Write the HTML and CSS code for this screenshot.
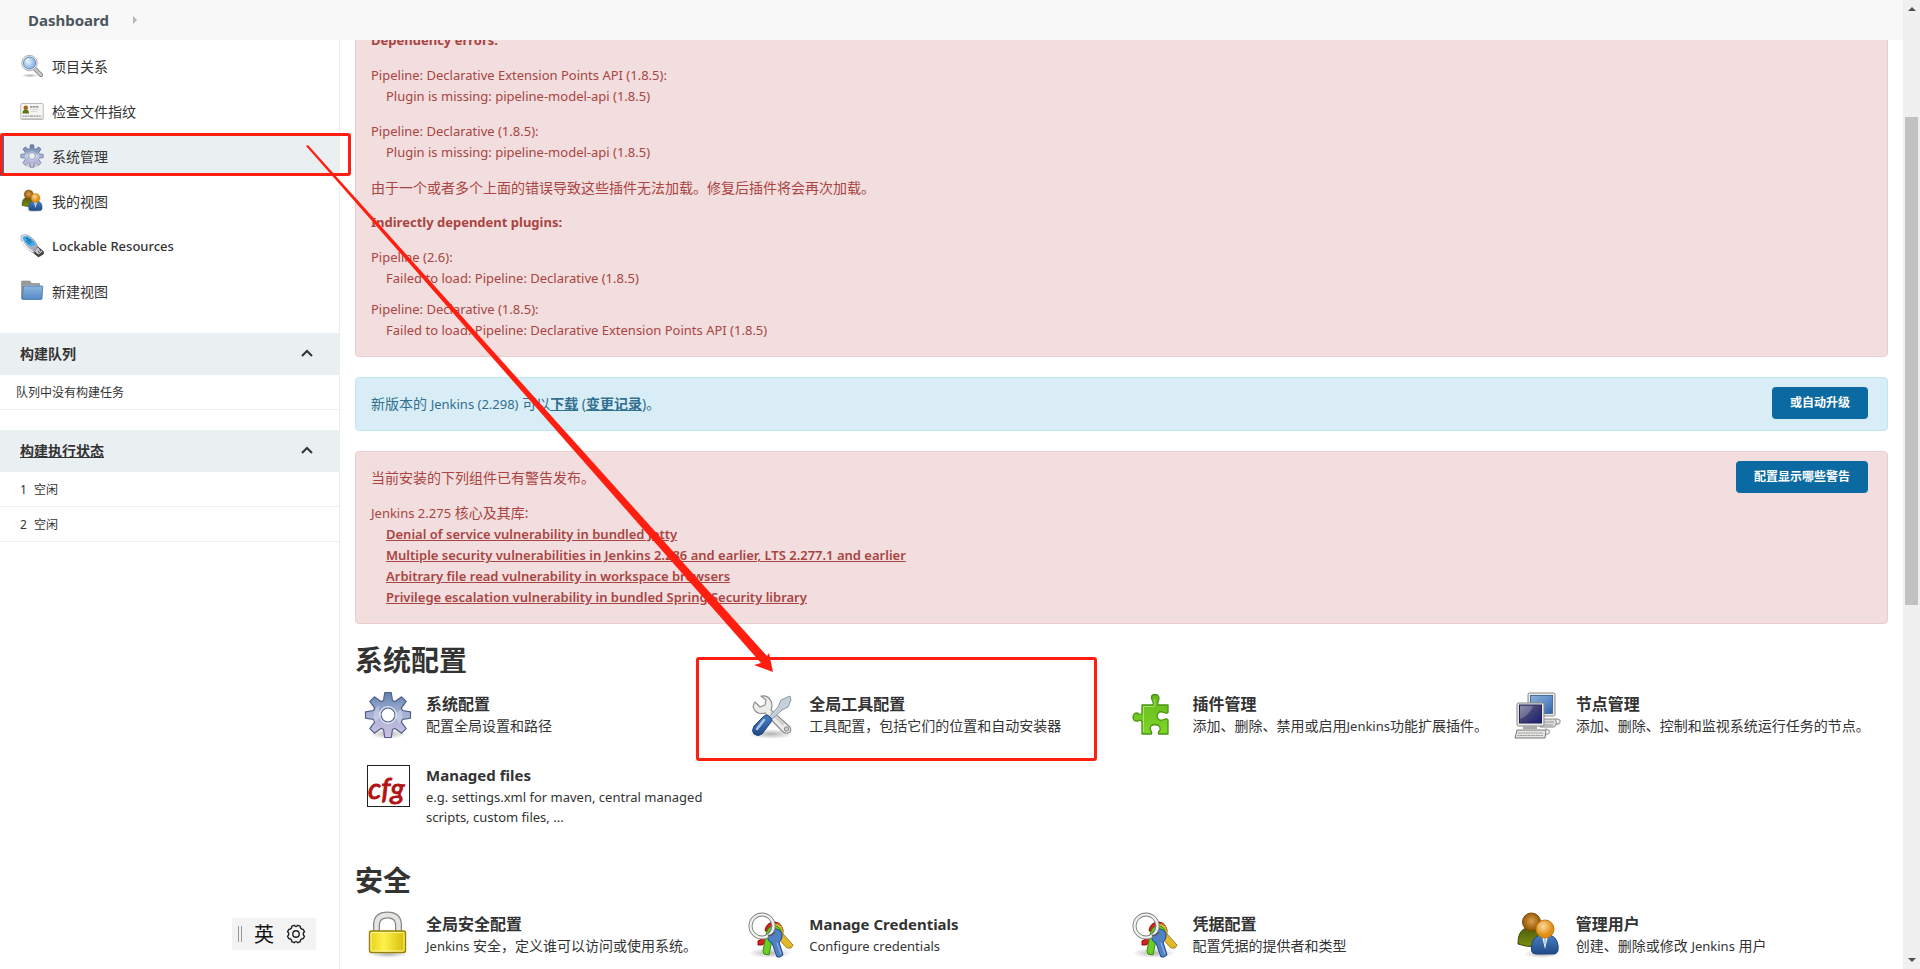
FILE: index.html
```html
<!DOCTYPE html>
<html lang="zh-CN">
<head>
<meta charset="utf-8">
<title>系统管理 [Jenkins]</title>
<link rel="stylesheet" href="styles.css">
</head>
<body>
<svg class="sprite" aria-hidden="true">
  <defs>
    <linearGradient id="gGear" x1="0" y1="0" x2="0" y2="1"><stop offset="0" stop-color="#5f7fae"/><stop offset=".45" stop-color="#a3b1d3"/><stop offset="1" stop-color="#cfc0e2"/></linearGradient>
    <radialGradient id="gShadow"><stop offset="0" stop-color="#000" stop-opacity=".3"/><stop offset="1" stop-color="#000" stop-opacity="0"/></radialGradient>
    <linearGradient id="gLock" x1="0" y1="0" x2="1" y2="0"><stop offset="0" stop-color="#e8d21c"/><stop offset=".4" stop-color="#fdf04a"/><stop offset="1" stop-color="#d8bc08"/></linearGradient>
    <linearGradient id="gGreen" x1="0" y1="0" x2="0" y2="1"><stop offset="0" stop-color="#66b81c"/><stop offset="1" stop-color="#7ed62a"/></linearGradient>
    <radialGradient id="gBrown" cx=".5" cy=".45"><stop offset="0" stop-color="#e0a050"/><stop offset="1" stop-color="#8f5902"/></radialGradient>
    <radialGradient id="gOrange" cx=".4" cy=".35"><stop offset="0" stop-color="#fbd9a0"/><stop offset="1" stop-color="#e08d12"/></radialGradient>
    <linearGradient id="gOlive" x1="0" y1="0" x2="0" y2="1"><stop offset="0" stop-color="#4d5f0c"/><stop offset="1" stop-color="#7d8d10"/></linearGradient>
    <linearGradient id="gBlue" x1="0" y1="0" x2="0" y2="1"><stop offset="0" stop-color="#4a80c4"/><stop offset="1" stop-color="#204a87"/></linearGradient>
    <linearGradient id="gScreen" x1="0" y1="0" x2="1" y2="1"><stop offset="0" stop-color="#77779c"/><stop offset=".5" stop-color="#3f3f74"/><stop offset="1" stop-color="#1c1c78"/></linearGradient>
    <linearGradient id="gScreen2" x1="0" y1="0" x2="1" y2="1"><stop offset="0" stop-color="#8db2da"/><stop offset=".55" stop-color="#5d8cc8"/><stop offset="1" stop-color="#2f62ad"/></linearGradient>
    <linearGradient id="gFolder" x1="0" y1="0" x2="0" y2="1"><stop offset="0" stop-color="#8db6e2"/><stop offset="1" stop-color="#5588c4"/></linearGradient>
    <radialGradient id="gLens" cx=".4" cy=".4"><stop offset="0" stop-color="#e6f1fb"/><stop offset="1" stop-color="#94bce6"/></radialGradient>
    <linearGradient id="gUsb" x1="0" y1="0" x2="1" y2="1"><stop offset="0" stop-color="#ececf4"/><stop offset="1" stop-color="#8f92a8"/></linearGradient>
  </defs>
  <symbol id="gear" viewBox="0 0 48 48">
    <ellipse cx="24" cy="43" rx="18" ry="5" fill="url(#gShadow)"/>
    <path fill="url(#gGear)" stroke="#51608c" stroke-width="1.2" stroke-linejoin="round" fill-rule="evenodd" d="M19.5 9.5L20.8 1.5H27.2L28.5 9.5L31.1 10.6L37.6 5.8L42.2 10.4L37.4 16.9L38.5 19.5L46.5 20.8V27.2L38.5 28.5L37.4 31.1L42.2 37.6L37.6 42.2L31.1 37.4L28.5 38.5L27.2 46.5H20.8L19.5 38.5L16.9 37.4L10.4 42.2L5.8 37.6L10.6 31.1L9.5 28.5L1.5 27.2V20.8L9.5 19.5L10.6 16.9L5.8 10.4L10.4 5.8L16.9 10.6ZM24 17a7 7 0 1 0 0 14a7 7 0 1 0 0-14z"/>
    <path d="M10 31q-2-12 5-17q-1 8 3 9q-3 2-4 6zM30 26q4-8 8-7q2 9-3 14q-1-5-5-7z" fill="#fff" opacity=".28"/>
    <circle cx="24" cy="24" r="8.3" fill="none" stroke="#e4e8f4" stroke-width="1.2"/>
  </symbol>
  <symbol id="search" viewBox="0 0 48 48">
    <ellipse cx="20" cy="43" rx="17" ry="4" fill="url(#gShadow)"/>
    <path d="M29 29L42 42" stroke="#777" stroke-width="8" stroke-linecap="round"/>
    <path d="M29 29L42 42" stroke="#c9c9c9" stroke-width="5" stroke-linecap="round"/>
    <circle cx="19" cy="18" r="15.500" fill="#eee" stroke="#999" stroke-width="1.500"/>
    <circle cx="19" cy="18" r="12" fill="url(#gLens)" stroke="#4f80b8" stroke-width="1.800"/>
    <path d="M10 17q2-8 10-8q-6 3-10 8z" fill="#fff"/>
  </symbol>
  <symbol id="card" viewBox="0 0 48 48">
    <rect x="1.500" y="9" width="45" height="32" rx="2" fill="#f5f5f3" stroke="#a5a5a2" stroke-width="1.500"/>
    <path d="M4 39.500H44" stroke="#bbb" stroke-width="2"/>
    <circle cx="11.500" cy="17.500" r="4.500" fill="#a5661a"/>
    <path d="M5 29q0-8 6.500-8t6.500 8z" fill="#5d7414"/>
    <path d="M20 15.500H38" stroke="#777" stroke-width="2.500" stroke-dasharray="5 1"/>
    <path d="M21 21H37M21 25H34" stroke="#ccc" stroke-width="1.500"/>
    <path d="M5 34H43" stroke="#9a9a9a" stroke-width="2.500" stroke-dasharray="3 1 6 1"/>
  </symbol>
  <symbol id="users" viewBox="0 0 48 48">
    <ellipse cx="28" cy="43" rx="18" ry="4" fill="url(#gShadow)"/>
    <path d="M4 33q-.5-13 8-16h13q7 5 6 17q-12 4-27-1z" fill="url(#gOlive)" stroke="#3f4f06"/>
    <circle cx="17.500" cy="11" r="9" fill="url(#gBrown)" stroke="#7a4a04"/>
    <path d="M17.500 40q-1.500-12 8-16h11q9 4 7.500 16q-1.500 3-4 3h-18q-3.500 0-4.500-3z" fill="url(#gBlue)" stroke="#1f4580"/>
    <path d="M28 25h6l-3 13z" fill="#fff"/><path d="M30 27h2l.5 4l-1.500 4l-1.500-4z" fill="#b8c8dc"/>
    <circle cx="31" cy="18" r="9" fill="url(#gOrange)" stroke="#bf780c"/>
  </symbol>
  <symbol id="usb" viewBox="0 0 48 48">
    <path d="M27 31L35 25L47 35V40L37 46L27 38z" fill="#444" stroke="#222"/>
    <path d="M35 27L45 35L37 41L28 34z" fill="#c8c8cc"/><path d="M36 35l3 2m0-5l3 2" stroke="#222" stroke-width="2"/>
    <path d="M2 3Q8-1 17 3Q31 11 35 24Q34 32 27 38Q15 32 7 22Q0 12 2 3z" fill="url(#gUsb)" stroke="#84879c"/>
    <path d="M5 6q8-5 17 3q7 6 9 12q-7 4-10 4Q7 18 5 6z" fill="#3eaee8"/>
    <path d="M11 9l5-1l-1 5l6-2l-2 5l6 0M12 14l8 6" stroke="#134f80" fill="none" stroke-width="1.500"/>
    <path d="M4 15Q12 29 26 35" fill="none" stroke="#fff" stroke-width="2.500"/>
  </symbol>
  <symbol id="folder" viewBox="0 0 48 48">
    <path d="M3 40V6q0-2 2-2h14q2 0 3 3l1 2h16v12z" fill="#9a9a98" stroke="#777"/>
    <path d="M6 13H38" stroke="#c4c4c4" stroke-width="2"/>
    <path d="M7 14H44q1.500 0 1.500 2L44 39q0 2-2 2H6q-2 0-1.700-2z" fill="url(#gFolder)" stroke="#3f6fae" stroke-width="1.500"/>
  </symbol>
  <symbol id="tools" viewBox="0 0 48 48">
    <ellipse cx="24" cy="43" rx="23" ry="5" fill="url(#gShadow)"/>
    <path d="M14 5Q21 4 24 10Q26 15 24 19L43 36Q45 41 41 42Q38 43 35 40L18 22Q10 24 7 18Q5 15 8 11L13 16L18 14L19 9z" fill="#ececea" stroke="#8c8e8a" stroke-width="1.200" stroke-linejoin="round"/>
    <path d="M25 22L36 33" stroke="#cfd0cd" stroke-width="3" stroke-linecap="round"/>
    <circle cx="39.500" cy="38" r="2.200" fill="#ccc" stroke="#888"/>
    <path d="M43 5L34 9L31 16L22 26L25 28L35 19L41 16L44 9z" fill="#c6d0da" stroke="#8d99a6"/>
    <path d="M17 25q4-2 6 1q3 2 1 5L15 43q-4 3-8 0q-3-3 0-8z" fill="url(#gBlue)" stroke="#1f4580"/>
    <path d="M17 29L10 38" stroke="#a9c8ec" stroke-width="2.500" stroke-linecap="round"/>
  </symbol>
  <symbol id="puzzle" viewBox="0 0 48 48">
    <path d="M11 14H21Q23 14 22 11Q18 4 24 3.500Q30 4 27 11Q26 14 28 14H37V21.500Q36 23 33 21.500Q27 19 26 25Q27 31 33 28.500Q36 27 37 29V43H27.500Q27 41 29 39Q30 34 24 33.500Q18 34 19.500 39Q21 41 20.500 43H11V31Q10 28 7 30Q2 31 2 26Q3 20 8 23Q11 24 11 22z" fill="url(#gGreen)" stroke="#4b9410" stroke-width="1.300" stroke-linejoin="round"/>
    <path d="M12.500 41V15.500H23Q25 13 23 8" fill="none" stroke="#a4e66a"/>
  </symbol>
  <symbol id="computers" viewBox="0 0 48 48">
    <path d="M28 28h13l2 4q-1 3-3 4H26z" fill="#ddd" stroke="#888"/>
    <path d="M29 31h11m-12 3h11" stroke="#999"/>
    <path d="M41 28q6 0 5 3t-5 2" fill="none" stroke="#aaa" stroke-width="1.500"/>
    <rect x="14" y="2" width="27" height="23" rx="1.500" fill="#e9e9e5" stroke="#888a85"/>
    <rect x="16.500" y="4.500" width="22" height="18" fill="url(#gScreen2)" stroke="#496f9e"/>
    <rect x="3" y="12" width="27" height="23" rx="1.500" fill="#e9e9e5" stroke="#888a85"/>
    <rect x="5.500" y="14" width="22" height="18" fill="url(#gScreen)" stroke="#22225e"/>
    <path d="M6 28Q16 24 19 15H6z" fill="#fff" opacity=".2"/>
    <path d="M9 35h14v3H9z" fill="#aaa"/>
    <path d="M3 39H32L31 47H1z" fill="#e4e4e0" stroke="#777"/>
    <path d="M4 42H29M3.500 44.500H29" stroke="#999" stroke-width="1.200" stroke-dasharray="2 .6"/>
    <path d="M31 38q6 1 4 4l-3 2" fill="none" stroke="#aaa" stroke-width="1.500"/>
  </symbol>
  <symbol id="lock" viewBox="0 0 48 48">
    <ellipse cx="24" cy="43" rx="20" ry="4" fill="url(#gShadow)"/>
    <path d="M12.500 22V13.500Q13 4 23.500 4T34.500 13.500V22" fill="none" stroke="#858784" stroke-width="7"/>
    <path d="M12.500 22V13.500Q13 4 23.500 4T34.500 13.500V22" fill="none" stroke="#e4e5e2" stroke-width="4.500"/>
    <rect x="5.500" y="20" width="36" height="21.500" rx="2" fill="url(#gLock)" stroke="#94820a" stroke-width="1.400"/>
    <rect x="7" y="21.500" width="33" height="18.500" rx="1" fill="none" stroke="#fff79a"/>
  </symbol>
  <symbol id="keys" viewBox="0 0 48 48">
    <ellipse cx="23" cy="42" rx="22" ry="5" fill="url(#gShadow)"/>
    <path d="M25 22L11 30V34H15L29 25z" fill="#d42020" stroke="#8f0a0a"/>
    <path d="M18 20q1-9 10-9q7 1 8 9z" fill="#d42020" stroke="#8f0a0a"/>
    <path d="M22 18q3-6 9-5q6 2 5 10L46 34l-2 3h-4L28 24z" fill="#e2b92c" stroke="#a37f10"/>
    <path d="M19 24q1-9 9-9q6 1 6 6l-9 8l-3 15l-5-1l-1-3z" fill="#6ccc28" stroke="#3d8b0d"/>
    <path d="M21 25q1-7 8-7q7 1 6 8q-1 4-3 5l4 13l-3 2h-3l-5-14q-5-2-4-7z" fill="#4f82c4" stroke="#204a87"/>
    <path d="M30 32L34 43" stroke="#9cc0ea"/>
    <circle cx="15" cy="15" r="11.500" fill="none" stroke="#7d7f7c" stroke-width="4"/>
    <circle cx="15" cy="15" r="11.500" fill="none" stroke="#f0f0ee" stroke-width="2.200"/>
    <path d="M21 25Q26 24 28 21" fill="none" stroke="#55606e" stroke-width="2"/>
  </symbol>
  <symbol id="chevron" viewBox="0 0 12 8"><path d="M1 7L6 2L11 7" fill="none" stroke="#333" stroke-width="2"/></symbol>
</svg>

<div class="page">
  <header class="crumbs">
    <a class="crumb" href="#">Dashboard</a>
    <svg class="crumb-arrow" viewBox="0 0 4 8"><path d="M0 0L4 4L0 8z" fill="#b5b5b5"/></svg>
  </header>
  <div class="body">
    <aside class="side">
      <nav class="tasks">
        <a class="task" href="#"><svg class="icon-sm"><use href="#search"/></svg>项目关系</a>
        <a class="task" href="#"><svg class="icon-sm"><use href="#card"/></svg>检查文件指纹</a>
        <a class="task task-active" href="#"><svg class="icon-sm"><use href="#gear"/></svg>系统管理</a>
        <a class="task" href="#"><svg class="icon-sm"><use href="#users"/></svg>我的视图</a>
        <a class="task task-latin" href="#"><svg class="icon-sm"><use href="#usb"/></svg>Lockable Resources</a>
        <a class="task" href="#"><svg class="icon-sm"><use href="#folder"/></svg>新建视图</a>
      </nav>
      <section class="pane">
        <h2 class="pane-head">构建队列<svg class="chev"><use href="#chevron"/></svg></h2>
        <p class="pane-row pane-empty">队列中没有构建任务</p>
      </section>
      <section class="pane">
        <h2 class="pane-head"><a href="#">构建执行状态</a><svg class="chev"><use href="#chevron"/></svg></h2>
        <p class="pane-row"><span>1</span>空闲</p>
        <p class="pane-row"><span>2</span>空闲</p>
      </section>
    </aside>

    <main class="main">
      <div class="alert alert-danger alert-cut">
        <p class="strong">Dependency errors:</p>
        <dl><dt>Pipeline: Declarative Extension Points API (1.8.5):</dt><dd>Plugin is missing: pipeline-model-api (1.8.5)</dd></dl>
        <dl><dt>Pipeline: Declarative (1.8.5):</dt><dd>Plugin is missing: pipeline-model-api (1.8.5)</dd></dl>
        <p class="zh">由于一个或者多个上面的错误导致这些插件无法加载。修复后插件将会再次加载。</p>
        <p class="strong">Indirectly dependent plugins:</p>
        <dl class="tight"><dt>Pipeline (2.6):</dt><dd>Failed to load: Pipeline: Declarative (1.8.5)</dd></dl>
        <dl class="tight"><dt>Pipeline: Declarative (1.8.5):</dt><dd>Failed to load: Pipeline: Declarative Extension Points API (1.8.5)</dd></dl>
      </div>

      <div class="alert alert-info">
        <p class="zh">新版本的 <span class="latin">Jenkins (2.298)</span> 可以<a href="#">下载</a> (<a href="#">变更记录</a>)。</p>
        <button class="btn" type="button">或自动升级</button>
      </div>

      <div class="alert alert-danger alert-action">
        <div>
          <p class="zh">当前安装的下列组件已有警告发布。</p>
          <dl>
            <dt class="zh"><span class="latin">Jenkins 2.275</span> 核心及其库:</dt>
            <dd><a href="#">Denial of service vulnerability in bundled Jetty</a></dd>
            <dd><a href="#">Multiple security vulnerabilities in Jenkins 2.286 and earlier, LTS 2.277.1 and earlier</a></dd>
            <dd><a href="#">Arbitrary file read vulnerability in workspace browsers</a></dd>
            <dd><a href="#">Privilege escalation vulnerability in bundled Spring Security library</a></dd>
          </dl>
        </div>
        <button class="btn" type="button">配置显示哪些警告</button>
      </div>

      <section class="group">
        <h1>系统配置</h1>
        <div class="items">
          <a class="item" href="#"><svg class="icon"><use href="#gear"/></svg><span class="item-text"><b>系统配置</b><span>配置全局设置和路径</span></span></a>
          <a class="item" href="#"><svg class="icon"><use href="#tools"/></svg><span class="item-text"><b>全局工具配置</b><span>工具配置，包括它们的位置和自动安装器</span></span></a>
          <a class="item" href="#"><svg class="icon"><use href="#puzzle"/></svg><span class="item-text"><b>插件管理</b><span>添加、删除、禁用或启用<span class="latin">Jenkins</span>功能扩展插件。</span></span></a>
          <a class="item" href="#"><svg class="icon"><use href="#computers"/></svg><span class="item-text"><b>节点管理</b><span>添加、删除、控制和监视系统运行任务的节点。</span></span></a>
          <a class="item" href="#"><svg class="icon" viewBox="0 0 48 48"><rect x="3.500" y="3.500" width="42" height="41" fill="#fff" stroke="#222"/><text x="4" y="37" class="cfg-word">cfg</text></svg><span class="item-text item-latin"><b>Managed files</b><span>e.g. settings.xml for maven, central managed scripts, custom files, ...</span></span></a>
        </div>
      </section>

      <section class="group">
        <h1>安全</h1>
        <div class="items">
          <a class="item" href="#"><svg class="icon"><use href="#lock"/></svg><span class="item-text"><b>全局安全配置</b><span><span class="latin">Jenkins</span> 安全，定义谁可以访问或使用系统。</span></span></a>
          <a class="item" href="#"><svg class="icon"><use href="#keys"/></svg><span class="item-text item-latin"><b>Manage Credentials</b><span>Configure credentials</span></span></a>
          <a class="item" href="#"><svg class="icon"><use href="#keys"/></svg><span class="item-text"><b>凭据配置</b><span>配置凭据的提供者和类型</span></span></a>
          <a class="item" href="#"><svg class="icon"><use href="#users"/></svg><span class="item-text"><b>管理用户</b><span>创建、删除或修改 <span class="latin">Jenkins</span> 用户</span></span></a>
        </div>
      </section>
    </main>
  </div>
</div>

<div class="scrollbar" aria-hidden="true">
  <svg class="sb-arrow" viewBox="0 0 8 4"><path d="M0 4L4 0L8 4z" fill="#505050"/></svg>
  <div class="sb-track"><div class="sb-thumb"></div></div>
  <svg class="sb-arrow" viewBox="0 0 8 4"><path d="M0 0L4 4L8 0z" fill="#505050"/></svg>
</div>

<div class="ime">
  <i class="grip"></i><span>英</span>
  <svg class="ime-gear" viewBox="0 0 24 24" fill="none" stroke="#222" stroke-width="1.500" stroke-linejoin="round"><path d="M10 2.500Q12 5 14 2.500L16.500 3.500Q16.500 6.800 19.800 7L21.200 9.500Q18.500 12 21.200 14.500L19.800 17Q16.500 17.200 16.500 20.500L14 21.500Q12 19 10 21.500L7.500 20.500Q7.500 17.200 4.200 17L2.800 14.500Q5.500 12 2.800 9.500L4.200 7Q7.500 6.800 7.500 3.500z"/><circle cx="12" cy="12" r="3.500"/></svg>
</div>

<div class="mark mark-menu"></div>
<div class="mark mark-tool"></div>
<svg class="mark-arrow" viewBox="0 0 467 527"><path d="M0 1L2 0L461 511L463 508L467 527L448 520L455 518Z" fill="#ff1e10"/></svg>
</body>
</html>
```
FILE: styles.css
```css
* { box-sizing: border-box; }
body {
  margin: 0;
  height: 100vh;
  overflow: hidden;
  display: flex;
  background: #fff;
  color: #333;
  font: 14px/21px "Noto Sans", "Noto Sans CJK SC", sans-serif;
}
p, dl, dd, h1, h2 { margin: 0; }
a { color: inherit; }
.sprite { position: absolute; width: 0; height: 0; }
.cfg-word { font: italic 29px "Lato", sans-serif; fill: #b31212; stroke: #b31212; }
.latin { font-size: 13px; }

.page { flex: 1; min-width: 0; display: flex; flex-direction: column; }
.crumbs {
  flex: none;
  display: flex;
  align-items: center;
  gap: 24px;
  height: 40px;
  padding-left: 28px;
  background: #f8f8f8;
}
.crumb { color: #4d545d; font-size: 15px; font-weight: 700; text-decoration: none; }
.crumb-arrow { width: 4px; height: 8px; }
.body { flex: 1; min-height: 0; display: flex; overflow: hidden; }

.side { flex: none; width: 340px; border-right: 1px solid #eaeff2; }
.tasks { display: grid; gap: 5px; padding-top: 6px; margin-bottom: 22px; }
.task {
  display: flex;
  align-items: center;
  gap: 8px;
  height: 40px;
  padding-left: 20px;
  text-decoration: none;
}
.task-active { background: #eaeff2; box-shadow: inset 4px 0 #0b82cc; }
.task-latin { font-size: 13px; font-weight: 500; }
.icon-sm { width: 24px; height: 24px; }
.pane { margin-bottom: 20px; }
.pane-head {
  display: flex;
  align-items: center;
  justify-content: space-between;
  height: 42px;
  padding: 0 26px 2px 20px;
  background: #eaeff2;
  font-size: 14px;
  font-weight: 700;
}
.chev { width: 12px; height: 8px; }
.pane-row {
  display: flex;
  align-items: center;
  gap: 7px;
  height: 35px;
  padding-left: 20px;
  border-bottom: 1px solid #eaeff2;
  font-size: 12px;
}
.pane-empty { padding-left: 16px; }

.main { flex: 1; min-width: 0; padding: 0 15px; }
.alert {
  padding: 15px;
  margin-bottom: 20px;
  border: 1px solid;
  border-radius: 4px;
}
.alert-danger { background: #f2dede; border-color: #ebccd1; color: #a94442; }
.alert-info { background: #d9edf7; border-color: #bce8f1; color: #31708f; }
.alert-info, .alert-action { display: flex; justify-content: space-between; align-items: flex-start; }
.alert-cut { margin-top: -26px; }
.alert p, .alert dl { margin-bottom: 14px; font-size: 13px; }
.alert dl.tight { margin-bottom: 10px; }
.alert dl:last-child, .alert dl.tight:last-child, .alert-info p.zh { margin-bottom: 0; }
.alert .zh { font-size: 14px; }
.alert dd { padding-left: 15px; }
.alert .strong, .alert p a { font-weight: 700; }
.alert dd a { font-weight: 600; }
.alert-action { margin-bottom: 15px; }
.btn {
  height: 32px;
  margin: -6px 4px -5px 0;
  padding: 0 18px;
  border: 0;
  border-radius: 4px;
  background: #0b6aa2;
  color: #fff;
  font: bold 12px/20px "Noto Sans", "Noto Sans CJK SC", sans-serif;
}

.group h1 { margin-bottom: 10px; font-size: 28px; line-height: 42px; font-weight: 700; }
.items { display: grid; grid-template-columns: repeat(4, 1fr); padding-bottom: 21px; }
.item { display: flex; gap: 14px; min-height: 71px; padding: 0 12px 11px 9px; text-decoration: none; }
.icon { flex: none; width: 48px; height: 48px; }
.item-text { display: flex; flex-direction: column; padding-top: 1px; line-height: 20px; }
.item-text b { font-size: 16px; line-height: 24px; }
.item-latin { font-size: 13px; }
.item-latin b { font-size: 15px; }

.scrollbar {
  flex: none;
  display: flex;
  flex-direction: column;
  align-items: center;
  width: 17px;
  padding: 7px 0;
  background: #f0f0f0;
}
.sb-arrow { width: 8px; height: 4px; }
.sb-track { flex: 1; width: 13px; padding-top: 106px; }
.sb-thumb { height: 52%; min-height: 488px; background: #c1c1c1; }

.ime {
  position: absolute;
  left: 232px;
  top: 918px;
  display: flex;
  align-items: center;
  width: 84px;
  height: 32px;
  padding-left: 6px;
  background: #f3f3f3;
  color: #111;
  font-size: 20px;
}
.grip { width: 4px; height: 16px; margin-right: 12px; border: solid #999; border-width: 0 1px; }
.ime-gear { width: 22px; height: 22px; margin-left: 11px; }

.mark { position: absolute; border: 3px solid #ff1e10; border-radius: 3px; }
.mark-menu { left: 0; top: 133px; width: 351px; height: 43px; }
.mark-tool { left: 696px; top: 657px; width: 401px; height: 104px; }
.mark-arrow { position: absolute; left: 306px; top: 145px; width: 467px; height: 527px; }
```
